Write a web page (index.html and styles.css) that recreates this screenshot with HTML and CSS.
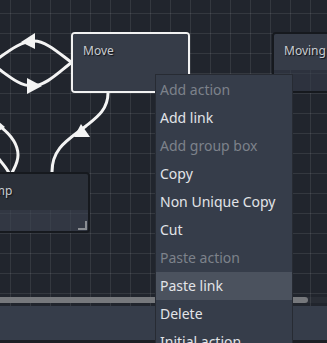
FILE: index.html
```html
<!DOCTYPE html>
<html lang="en">
<head>
    <meta charset="UTF-8">
    <meta name="viewport" content="width=device-width, initial-scale=1.0">
    <title>State Graph</title>
    <link rel="stylesheet" href="styles.css">
</head>
<body>

    <!-- Editor -->
    <div class="editor">

        <!-- Graph canvas -->
        <div class="graph">
            <svg class="links" width="327" height="306" viewBox="0 0 327 306">
                <g fill="none" stroke="#f4f4f4" stroke-width="3" stroke-linecap="round">
                    <path d="M71 62 C60 54 46 41 34 41 C22 41 10 50 -4 60"></path>
                    <path d="M71 63 C60 71 46 86 32 86 C20 86 10 77 -4 67"></path>
                    <path d="M108 93 C108 110 96 118 86 126 C68 140 52 148 52 172"></path>
                    <path d="M-6 122 C6 130 18 142 18 155 C18 163 14 168 12 173"></path>
                    <path d="M-2 158 C2 163 6 167 9 173"></path>
                </g>
                <g fill="#f4f4f4">
                    <polygon points="21,42 35,33 35,49"></polygon>
                    <polygon points="42,86 27,78 27,94"></polygon>
                    <polygon points="81,124 74,137 90,137"></polygon>
                    <polygon points="5,127 -8,116 -6,134"></polygon>
                </g>
            </svg>

            <div class="node node-move is-selected">
                <div class="node-title">Move</div>
                <div class="node-body"></div>
            </div>

            <div class="node node-moving">
                <div class="node-title">Moving</div>
                <div class="node-body"></div>
            </div>

            <div class="node node-jump">
                <div class="node-title">Jump</div>
                <div class="node-body"><span class="resize-handle"></span></div>
            </div>

            <!-- Horizontal scrollbar -->
            <div class="hscroll">
                <div class="hscroll-thumb"></div>
            </div>
        </div>

        <!-- Bottom panel -->
        <div class="bottom-panel"></div>
        <div class="bottom-strip"></div>

        <!-- Context menu -->
        <ul class="context-menu">
            <li class="menu-item is-disabled">Add action</li>
            <li class="menu-item">Add link</li>
            <li class="menu-item is-disabled">Add group box</li>
            <li class="menu-item">Copy</li>
            <li class="menu-item">Non Unique Copy</li>
            <li class="menu-item">Cut</li>
            <li class="menu-item is-disabled">Paste action</li>
            <li class="menu-item is-hover">Paste link</li>
            <li class="menu-item">Delete</li>
            <li class="menu-item">Initial action</li>
        </ul>
    </div>

</body>
</html>
```

FILE: styles.css
```css
/* General Styles */
html, body {
    margin: 0;
    padding: 0;
    width: 100%;
    height: 100%;
    overflow: hidden;
    background: #21252d;
    font-family: "Noto Sans", "DejaVu Sans", sans-serif;
}

/* Editor */
.editor {
    position: relative;
    display: flex;
    flex-direction: column;
    width: 327px;
    height: 343px;
}

/* Graph canvas with grid */
.graph {
    position: relative;
    height: 306px;
    flex-shrink: 0;
    overflow: hidden;
    background-color: #21252d;
    background-image:
        linear-gradient(to right, rgba(255, 255, 255, 0.085) 1px, transparent 1px),
        linear-gradient(to bottom, rgba(255, 255, 255, 0.085) 1px, transparent 1px);
    background-size: 20px 20px;
    background-position: 10px 13px;
}

.links {
    position: absolute;
    top: 0;
    left: 0;
    overflow: visible;
}

/* Nodes */
.node {
    position: absolute;
    display: flex;
    flex-direction: column;
    width: 119px;
    height: 61px;
    box-sizing: border-box;
    border: 2px solid #16191e;
    border-radius: 4px;
    overflow: hidden;
}

.node-title {
    height: 36px;
    box-sizing: border-box;
    padding: 9px 10px 0;
    font-size: 12px;
    line-height: 16px;
    color: #c9ccd1;
    text-shadow: 1px 1px 1px #111318;
    background: #363c48;
    white-space: nowrap;
}

.node-body {
    position: relative;
    flex: 1;
    background: rgba(54, 60, 73, 0.6);
}

.node-move {
    left: 71px;
    top: 32px;
}

.node-moving {
    left: 272px;
    top: 32px;
}

.node-jump {
    left: -29px;
    top: 172px;
}

.node-jump .node-title {
    background: #2b3039;
}

.node-jump .node-body {
    background: rgba(62, 68, 82, 0.6);
}

.node.is-selected {
    border-color: #f2f2f2;
}

.node.is-selected .node-body {
    background: #363c48;
}

/* Resize corner */
.resize-handle {
    position: absolute;
    right: 1px;
    bottom: 1px;
    width: 7px;
    height: 7px;
    border-right: 2px solid #8a8d92;
    border-bottom: 2px solid #8a8d92;
}

/* Horizontal scrollbar */
.hscroll {
    position: absolute;
    left: 0;
    right: 0;
    bottom: 3px;
    height: 6px;
    background: rgba(255, 255, 255, 0.04);
}

.hscroll-thumb {
    width: 308px;
    height: 100%;
    border-radius: 0 3px 3px 0;
    background: #76787c;
}

/* Bottom panel */
.bottom-panel {
    height: 34px;
    background: #363d4a;
}

.bottom-strip {
    flex: 1;
    background: #1c1f25;
}

/* Context menu */
.context-menu {
    position: absolute;
    left: 155px;
    top: 74px;
    width: 138px;
    box-sizing: border-box;
    margin: 0;
    padding: 1px 0;
    list-style: none;
    background: #363d4a;
    border: 1px solid #272b33;
}

.menu-item {
    height: 28px;
    padding: 0 4px;
    font-size: 14px;
    line-height: 28px;
    color: #e2e4e8;
    white-space: nowrap;
}

.menu-item.is-disabled {
    color: #7d828b;
}

.menu-item.is-hover {
    background: #4b525e;
}
```
